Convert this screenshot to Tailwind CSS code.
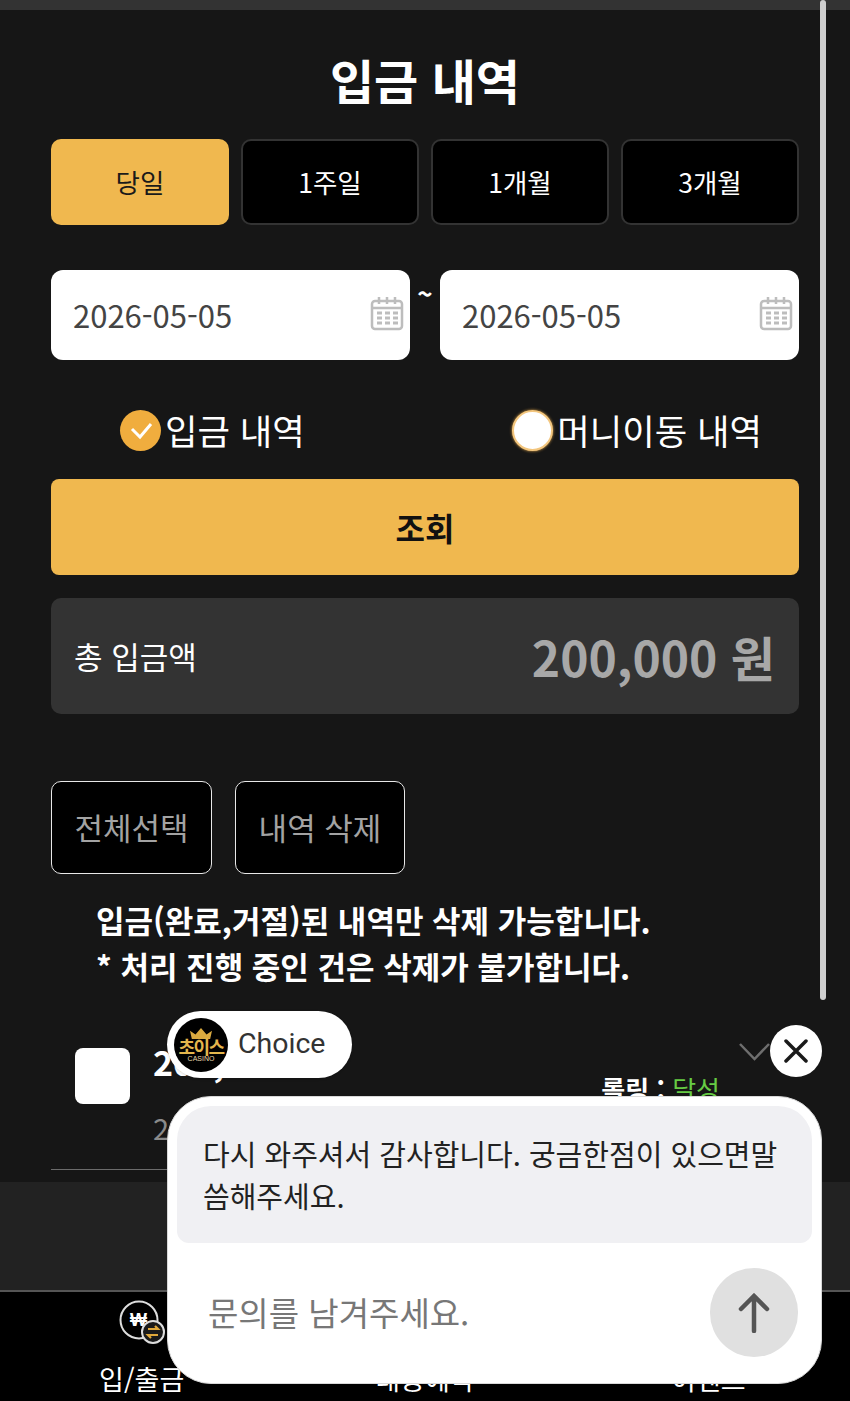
<!DOCTYPE html>
<html lang="ko">

<head>
    <meta charset="UTF-8" />
    <meta name="viewport" content="width=device-width, initial-scale=1.0" />
    <title>입금 내역</title>
    <script src="https://cdn.jsdelivr.net/npm/@tailwindcss/browser@4"></script>
</head>

<body class="bg-[#161616]">
    <div class="relative w-[850px] h-[1401px] overflow-hidden flex flex-col bg-[#161616] text-white font-['Noto_Sans_CJK_KR','Noto_Sans',sans-serif]">

        <!-- top strip -->
        <div class="h-[10px] shrink-0 bg-[#333333]"></div>

        <!-- content -->
        <main class="flex-1 min-h-0 overflow-hidden px-[51px]">
            <h1 class="pt-[34px] mb-[25px] text-center text-[48px] leading-[70px] font-bold">입금 내역</h1>

            <!-- period tabs -->
            <div class="grid grid-cols-4 gap-3 h-[86px] text-[26.500px]">
                <button class="rounded-[10px] bg-[#f0b84f] text-[#1a1a1a]">당일</button>
                <button class="rounded-[10px] bg-black border-2 border-[#333333]">1주일</button>
                <button class="rounded-[10px] bg-black border-2 border-[#333333]">1개월</button>
                <button class="rounded-[10px] bg-black border-2 border-[#333333]">3개월</button>
            </div>

            <!-- dates -->
            <div class="mt-[45px] grid grid-cols-[359px_30px_359px] h-[90px]">
                <div class="flex items-center justify-between rounded-xl bg-white pl-[22px] pr-[6px] text-[31px] text-[#444444]">
                    <span>2026-05-05</span>
                    <svg class="w-[34px] h-[36px] -mt-[4px]" viewBox="0 0 34 36" fill="none" stroke="#bdbdbd" stroke-width="2.500">
                        <rect x="2" y="6" width="30" height="28" rx="3" />
                        <path d="M2 13h30M9 2v7M17 2v7M25 2v7" />
                        <path d="M7 18h5M15 18h5M23 18h5M7 23h5M15 23h5M23 23h5M7 28h5M15 28h5M23 28h5" stroke-width="3" />
                    </svg>
                </div>
                <div class="text-center text-[26px] font-bold leading-[46px]">~</div>
                <div class="flex items-center justify-between rounded-xl bg-white pl-[22px] pr-[6px] text-[31px] text-[#444444]">
                    <span>2026-05-05</span>
                    <svg class="w-[34px] h-[36px] -mt-[4px]" viewBox="0 0 34 36" fill="none" stroke="#bdbdbd" stroke-width="2.500">
                        <rect x="2" y="6" width="30" height="28" rx="3" />
                        <path d="M2 13h30M9 2v7M17 2v7M25 2v7" />
                        <path d="M7 18h5M15 18h5M23 18h5M7 23h5M15 23h5M23 23h5M7 28h5M15 28h5M23 28h5" stroke-width="3" />
                    </svg>
                </div>
            </div>

            <!-- radios -->
            <div class="mt-[50px] h-[40px] pl-[69px] pr-[37px] flex items-center justify-between text-[35.300px]">
                <label class="flex items-center gap-[4px]">
                    <span class="w-[41px] h-[41px] rounded-full bg-[#f0ad3e] flex items-center justify-center">
                        <svg class="w-[26px] h-[26px]" viewBox="0 0 26 26" fill="none" stroke="#ffffff" stroke-width="3">
                            <path d="M4 12l8 8L23 7" />
                        </svg>
                    </span>
                    <span>입금 내역</span>
                </label>
                <label class="flex items-center gap-[4px]">
                    <span class="w-[41px] h-[41px] rounded-full bg-white border-2 border-[#f3c67e] shadow-[0_0_3px_#e5a94c]"></span>
                    <span>머니이동 내역</span>
                </label>
            </div>

            <button class="mt-[29px] w-full h-[96px] rounded-lg bg-[#f0b84f] text-[#111111] text-[32px] font-bold">조회</button>

            <!-- total -->
            <div class="mt-[23px] h-[116px] rounded-[10px] bg-[#333333] pl-[23px] pr-[24px] flex items-center justify-between">
                <span class="text-[31px]">총 입금액</span>
                <span class="text-[48px] font-bold text-[#a8a8a8]">200,000 원</span>
            </div>

            <!-- delete actions -->
            <div class="mt-[67px] flex gap-[23px] h-[93px] text-[31px] text-[#a3a3a3]">
                <button class="w-[161px] rounded-[10px] bg-black border-[1.500px] border-[#e8e8e8]">전체선택</button>
                <button class="w-[170px] rounded-[10px] bg-black border-[1.500px] border-[#e8e8e8]">내역 삭제</button>
            </div>

            <div class="mt-[23px] pl-[45px] text-[31px] leading-[46px] font-bold">
                <p>입금(완료,거절)된 내역만 삭제 가능합니다.</p>
                <p>* 처리 진행 중인 건은 삭제가 불가합니다.</p>
            </div>

            <!-- list row -->
            <div class="h-[181px] flex border-b border-[#6b6b6b]">
                <span class="mt-[59px] ml-[24px] w-[55px] h-[56px] rounded-lg bg-white shrink-0"></span>
                <div class="ml-[23px] mt-[53px]">
                    <p class="text-[34px] leading-[40px] font-bold">200,000</p>
                    <p class="mt-[25px] text-[29px] leading-[40px] text-[#8a8a8a]">2026-05-05 14:20:11</p>
                </div>
                <div class="ml-auto mr-[29px] pt-[54px] flex flex-col items-end">
                    <svg class="w-[31px] h-[18px]" viewBox="0 0 31 18" fill="none" stroke="#6e6e6e" stroke-width="2.500">
                        <path d="M1 1l14.500 15L30 1" />
                    </svg>
                    <p class="mt-[11px] mr-[50px] text-[26px] leading-[34px] font-bold">롤링 : <span class="text-[#66cc44] font-normal">달성</span></p>
                </div>
            </div>
        </main>

        <!-- bottom bar -->
        <footer class="shrink-0">
            <div class="h-[108px] bg-[#222222]"></div>
            <nav class="h-[111px] bg-black border-t-2 border-[#555555] grid grid-cols-3 text-center text-[27px] leading-[36px]">
                <div class="pt-[7px] flex flex-col items-center">
                    <svg class="w-[46px] h-[46px]" viewBox="0 0 46 46" fill="none">
                        <circle cx="20" cy="21" r="18.500" stroke="#dddddd" stroke-width="2" />
                        <text x="19.500" y="27" text-anchor="middle" fill="#ffffff" font-size="18" font-weight="700" font-family="Liberation Sans, sans-serif">₩</text>
                        <circle cx="34" cy="33" r="11" fill="#1a1a1a" stroke="#dddddd" stroke-width="2" />
                        <path d="M29 30h10l-3-3M39 36H29l3 3" stroke="#e0a83a" stroke-width="2.200" />
                    </svg>
                    <span class="mt-[16px]">입/출금</span>
                </div>
                <div class="pt-[7px] flex flex-col items-center">
                    <div class="h-[46px]"></div>
                    <span class="mt-[16px]">내용예약</span>
                </div>
                <div class="pt-[7px] flex flex-col items-center">
                    <div class="h-[46px]"></div>
                    <span class="mt-[16px]">이벤트</span>
                </div>
            </nav>
        </footer>

        <!-- scrollbar -->
        <div class="absolute left-[820px] top-0 w-[6px] h-[1000px] rounded-full bg-[#cfcfcf]"></div>

        <!-- chat launcher label -->
        <div class="absolute left-[167px] top-[1011px] w-[185px] h-[67px] rounded-full bg-white flex items-center pl-[7px] shadow-sm">
            <div class="relative w-[54px] h-[54px] rounded-full bg-black flex flex-col items-center justify-center overflow-hidden leading-none">
                <svg class="w-[24px] h-[11px]" viewBox="0 0 24 12" fill="#d9a93f">
                    <path d="M2 12L0 3l6 4 6-7 6 7 6-4-2 9z" />
                </svg>
                <span class="text-[18px] font-bold text-[#e4b64c] tracking-[-1.500px] -mt-[2px]">초이스</span>
                <span class="text-[7px] text-[#e8d9ac] font-['Liberation_Sans',sans-serif]">CASINO</span>
            </div>
            <span class="ml-[10px] text-[28.500px] text-[#333333] font-['Roboto',sans-serif]">Choice</span>
        </div>

        <!-- chat close -->
        <button class="absolute left-[770px] top-[1025px] w-[52px] h-[52px] rounded-full bg-white flex items-center justify-center">
            <svg class="w-[24px] h-[24px]" viewBox="0 0 24 24" fill="none" stroke="#1a1a1a" stroke-width="3.500" stroke-linecap="round">
                <path d="M2 2l20 20M22 2L2 22" />
            </svg>
        </button>

        <!-- chat panel -->
        <div class="absolute left-[167px] top-[1096px] w-[655px] h-[288px] rounded-[44px] bg-white border border-[#d8d8d8] p-[9px]">
            <div class="h-[137px] rounded-t-[34px] rounded-b-[12px] bg-[#f0f0f3] pl-[26px] pr-[20px] pt-[26px] text-[29px] leading-[42px] text-[#222222]">
                다시 와주셔서 감사합니다. 궁금한점이 있으면말<br>씀해주세요.
            </div>
            <div class="mt-[25px] pl-[31px] pr-[14px] flex items-center justify-between">
                <span class="text-[33px] text-[#777777]">문의를 남겨주세요.</span>
                <button class="w-[88px] h-[89px] rounded-full bg-[#e0e0e0] flex items-center justify-center">
                    <svg class="w-[34px] h-[40px]" viewBox="0 0 34 40" fill="none" stroke="#555555" stroke-width="4.500" stroke-linecap="round">
                        <path d="M17 38V3M4 16L17 3l13 13" />
                    </svg>
                </button>
            </div>
        </div>
    </div>
</body>

</html>
